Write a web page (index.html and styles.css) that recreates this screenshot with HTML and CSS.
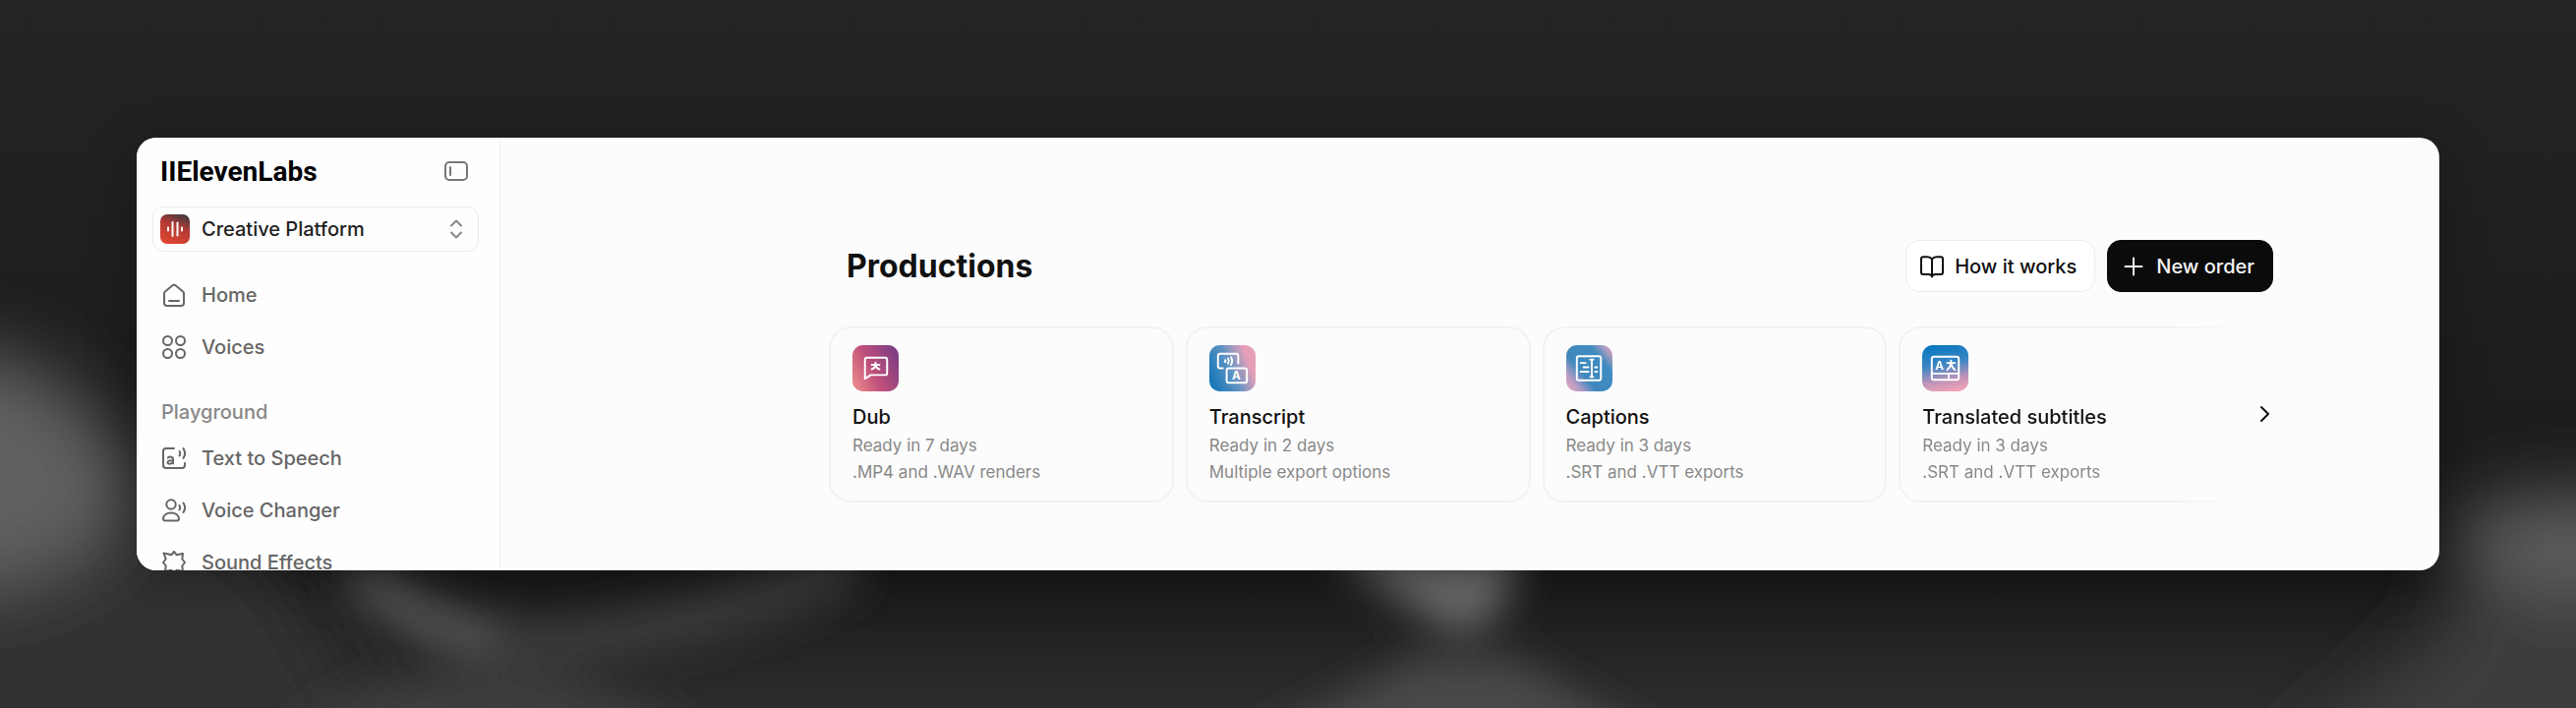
FILE: index.html
```
<!DOCTYPE html>
<html lang="en">
<head>
  <meta charset="UTF-8">
  <title>Productions - ElevenLabs</title>
  <meta name="viewport" content="width=device-width, initial-scale=1" />
  <link rel="stylesheet" href="styles.css">
</head>
<body>

  <svg class="backdrop" viewBox="0 0 2620 720" preserveAspectRatio="none" aria-hidden="true">
    <defs>
      <filter id="soft" x="-50%" y="-50%" width="200%" height="200%"><feGaussianBlur stdDeviation="20" /></filter>
      <filter id="softer" x="-50%" y="-50%" width="200%" height="200%"><feGaussianBlur stdDeviation="36" /></filter>
      <linearGradient id="base" x2="0" y2="1">
        <stop offset="0" stop-color="#242424" />
        <stop offset=".5" stop-color="#1e1e1e" />
        <stop offset=".82" stop-color="#1a1a1a" />
        <stop offset="1" stop-color="#2d2d2d" />
      </linearGradient>
    </defs>
    <rect width="2620" height="720" fill="url(#base)" />
    <g filter="url(#softer)">
      <path d="M-120 370C20 340 90 400 150 490L280 560L420 800H-120Z" fill="#313131" />
      <path d="M-100 360C20 340 80 390 130 470L110 540C60 590 0 600 -100 600Z" fill="#606060" />
      <path d="M2300 800L2450 670L2550 570L2740 460V800Z" fill="#3c3c3c" />
      <ellipse cx="2610" cy="550" rx="120" ry="46" fill="#606060" />
    </g>
    <g filter="url(#soft)" fill="none">
      <path d="M350 575C410 625 480 665 580 655C700 635 800 610 870 570" stroke="#3a3a3a" stroke-width="50" />
      <path d="M370 590C410 620 450 640 500 650" stroke="#585858" stroke-width="30" />
      <path d="M290 760C340 680 560 640 720 760Z" fill="#3d3d3d" />
      <path d="M1350 560H1550L1520 630L1480 645Z" fill="#6c6c6c" />
      <path d="M1270 760L1440 670H1540L1690 760Z" fill="#4a4a4a" />
    </g>
  </svg>

  <div class="window">

    <aside class="sidebar">
      <div class="brand">
        <a class="logo" href="#">IIElevenLabs</a>
        <button class="icon-button" type="button" aria-label="Collapse sidebar">
          <svg class="icon" viewBox="0 0 24 24"><rect x="1" y="3" width="22" height="18" rx="4" /><path d="M6 8v8" /></svg>
        </button>
      </div>

      <button class="switcher" type="button">
        <svg class="switcher-logo" viewBox="0 0 30 30">
          <defs>
            <linearGradient id="red" x1=".7" y1="0" x2=".3" y2="1">
              <stop offset="0" stop-color="#453c3c" />
              <stop offset=".4" stop-color="#b23a34" />
              <stop offset="1" stop-color="#e04632" />
            </linearGradient>
          </defs>
          <rect width="30" height="30" rx="7" fill="url(#red)" />
          <path d="M8 13.500v3M12.500 8v14M17.500 8.500v13M22 13.500v3" stroke="#fff" stroke-width="2" stroke-linecap="round" />
        </svg>
        <span class="switcher-label">Creative Platform</span>
        <svg class="icon icon-muted" viewBox="0 0 24 24"><path d="M7 8.500l5-5 5 5M7 15.500l5 5 5-5" /></svg>
      </button>

      <nav class="nav">
        <a class="nav-item" href="#">
          <svg class="icon" viewBox="0 0 24 24"><path d="M2 10.500a3 3 0 0 1 1.200-2.300L10.200 2.400a2.900 2.900 0 0 1 3.600 0l7 5.800A3 3 0 0 1 22 10.500V20a3 3 0 0 1-3 3H5a3 3 0 0 1-3-3ZM7 18h10" /></svg>
          Home
        </a>
        <a class="nav-item" href="#">
          <svg class="icon" viewBox="0 0 24 24"><circle cx="5.500" cy="5.500" r="4.500" /><circle cx="18.500" cy="5.500" r="4.500" /><circle cx="5.500" cy="18.500" r="4.500" /><circle cx="18.500" cy="18.500" r="4.500" /></svg>
          Voices
        </a>
        <h2 class="nav-title">Playground</h2>
        <a class="nav-item" href="#">
          <svg class="icon" viewBox="0 0 24 24"><path d="M12 2H4a3 3 0 0 0-3 3v14a3 3 0 0 0 3 3h16a3 3 0 0 0 3-3v-2M17.500 5c1 1.500 1 3 0 4.500M21.500 2c2 3.500 2 7 0 10" /><path d="M5.800 11.500c1.500-1.500 5.200-1.200 5.200 1.500v4.500M11 14.500c-4-.5-5.500.2-5.500 1.700 0 2.200 4.500 2 5.500-.5" /></svg>
          Text to Speech
        </a>
        <a class="nav-item" href="#">
          <svg class="icon" viewBox="0 0 24 24"><circle cx="9" cy="6" r="4.700" /><path d="M9 14.500c-4.500 0-8 2.500-8 6 0 1.300.7 2 2 2h12c1.300 0 2-.7 2-2 0-3.500-3.500-6-8-6ZM17.500 7c.8 1.500.8 3 0 4.500M21.500 4.500c2 3 2 6.500 0 9.500" /></svg>
          Voice Changer
        </a>
        <a class="nav-item" href="#">
          <svg class="icon" viewBox="0 0 24 24"><path d="M12 1l2.700 3.300L21 3l-.7 5.500L23 12l-2.700 3.500L21 21l-6.300-1.300L12 23l-2.700-3.300L3 21l.7-5.500L1 12l2.700-3.500L1.500 2.500l7.800 1.800Z" /></svg>
          Sound Effects
        </a>
      </nav>
    </aside>

    <main class="main">
      <header class="page-header">
        <h1 class="page-title">Productions</h1>
        <div class="actions">
          <button class="button" type="button">
            <svg class="icon" viewBox="0 0 24 24"><path d="M12 4.500c-1-1.500-2.500-2.200-4.500-2.200H3a2 2 0 0 0-2 2V18a2 2 0 0 0 2 2h5.500c2 0 3.500 1 3.500 2.500 0-1.500 1.500-2.500 3.500-2.500H21a2 2 0 0 0 2-2V4.300a2 2 0 0 0-2-2h-4.500c-2 0-3.500.7-4.500 2.200ZM12 4.500v18" /></svg>
            How it works
          </button>
          <button class="button button-dark" type="button">
            <svg class="icon" viewBox="0 0 24 24"><path d="M12 3.500v17M3.500 12h17" /></svg>
            New order
          </button>
        </div>
      </header>

      <section class="carousel">
        <div class="cards">
          <a class="card" href="#">
            <svg class="card-icon" viewBox="0 0 48 48">
              <defs>
                <linearGradient id="dub" x1="0" y1=".7" x2="1" y2=".2">
                  <stop offset="0" stop-color="#e5848a" />
                  <stop offset=".4" stop-color="#c0507a" />
                  <stop offset="1" stop-color="#7c3d84" />
                </linearGradient>
              </defs>
              <rect width="48" height="48" rx="11" fill="url(#dub)" />
              <path class="line" d="M13 35V15a2 2 0 0 1 2-2h19a2 2 0 0 1 2 2v14a2 2 0 0 1-2 2H19Z" />
              <path class="line" d="M20 20.500h8M24 18v2.500M24 20.500c-.5 2.500-2 4-4 4.500M24 20.500c.5 2.500 2 4 4 4.500" />
            </svg>
            <h3 class="card-title">Dub</h3>
            <p class="card-text">Ready in 7 days<br>.MP4 and .WAV renders</p>
          </a>
          <a class="card" href="#">
            <svg class="card-icon" viewBox="0 0 48 48">
              <defs>
                <linearGradient id="transcript" x1="0" y1=".7" x2="1" y2=".3">
                  <stop offset="0" stop-color="#1878b8" />
                  <stop offset=".45" stop-color="#5c93c4" />
                  <stop offset=".85" stop-color="#e5a0b8" />
                </linearGradient>
              </defs>
              <rect width="48" height="48" rx="11" fill="url(#transcript)" />
              <path class="line" d="M14 24h-3a2 2 0 0 1-2-2V11a2 2 0 0 1 2-2h17a2 2 0 0 1 2 2v8M16.500 15.500v2M19.500 14c1 1.800 1 3.200 0 5M22.500 12.500c1.500 2.700 1.500 5.300 0 8" />
              <rect class="line" x="18" y="24" width="21" height="15" rx="2" />
              <text class="glyph" x="28" y="36">A</text>
            </svg>
            <h3 class="card-title">Transcript</h3>
            <p class="card-text">Ready in 2 days<br>Multiple export options</p>
          </a>
          <a class="card" href="#">
            <svg class="card-icon" viewBox="0 0 48 48">
              <defs>
                <linearGradient id="captions" x1="0" y1=".9" x2="1" y2=".1">
                  <stop offset="0" stop-color="#e0a4c0" />
                  <stop offset=".15" stop-color="#b59cc4" />
                  <stop offset=".35" stop-color="#3f88be" />
                  <stop offset=".75" stop-color="#3f8cc0" />
                  <stop offset="1" stop-color="#e0a4c0" />
                </linearGradient>
              </defs>
              <rect width="48" height="48" rx="11" fill="url(#captions)" />
              <rect class="line" x="11" y="11.500" width="25" height="25" rx="2" />
              <path class="line" d="M26.500 15v18M25 15h3M25 33h3M15 18.500h5M18 23h5M15 27.500h8M30 23h2M30 27.500h2" />
            </svg>
            <h3 class="card-title">Captions</h3>
            <p class="card-text">Ready in 3 days<br>.SRT and .VTT exports</p>
          </a>
          <a class="card card-fade" href="#">
            <svg class="card-icon" viewBox="0 0 48 48">
              <defs>
                <linearGradient id="subtitles" x1=".4" y1="0" x2=".6" y2="1">
                  <stop offset="0" stop-color="#0b78c0" />
                  <stop offset=".4" stop-color="#3a86c4" />
                  <stop offset=".75" stop-color="#c093b8" />
                  <stop offset="1" stop-color="#f0a2b6" />
                </linearGradient>
              </defs>
              <rect width="48" height="48" rx="11" fill="url(#subtitles)" />
              <rect class="line" x="10" y="12" width="28" height="24" rx="2" />
              <text class="glyph" x="18" y="26">A</text>
              <path class="line" d="M26 18.500h8M30 16v2.500M30 18.500c-.5 3.500-2 5.500-4 7M30 18.500c.5 3.500 2 5.500 4 7M10 29.500h28M27.500 29.500V36" />
            </svg>
            <h3 class="card-title">Translated subtitles</h3>
            <p class="card-text">Ready in 3 days<br>.SRT and .VTT exports</p>
          </a>
        </div>
        <button class="next" type="button" aria-label="Next">
          <svg class="icon" viewBox="0 0 24 24"><path d="M9 5l7 7-7 7" /></svg>
        </button>
      </section>
    </main>

  </div>

</body>
</html>
```
FILE: styles.css
```
* {
  box-sizing: border-box
}

html,
body {
  margin: 0;
  padding: 0
}

body,
button {
  font-family: Inter, "Helvetica Neue", Arial, sans-serif;
  font-size: 20px;
  font-weight: 500
}

body {
  display: flex;
  height: 100vh;
  padding: 140px 139px;
  background: #222;
  color: #111;
  overflow: hidden
}

h1,
h2,
h3,
p {
  margin: 0;
  font-weight: 500
}

a {
  color: inherit;
  text-decoration: none
}

button {
  margin: 0;
  padding: 0;
  border: 0;
  background: none;
  color: inherit;
  cursor: pointer
}

.backdrop {
  position: absolute;
  top: 0;
  left: 0;
  width: 100%;
  height: 100%
}

.icon {
  flex: none;
  width: 24px;
  height: 24px;
  fill: none;
  stroke: currentColor;
  stroke-width: 2;
  stroke-linecap: round;
  stroke-linejoin: round
}

.icon-muted {
  color: #888
}

.window {
  position: relative;
  display: flex;
  flex: 1;
  border-radius: 20px;
  background: #fcfcfc;
  box-shadow: 0 8px 50px rgba(0, 0, 0, 0.3);
  overflow: hidden
}

/* sidebar */

.sidebar {
  flex: none;
  width: 370px;
  padding: 16px 21px 0 16px;
  border-right: 1px solid #f1f1f1;
  background: #fefefe
}

.brand {
  display: flex;
  align-items: center;
  justify-content: space-between;
  height: 36px;
  padding: 0 11px 0 8px
}

.logo {
  color: #000;
  font-size: 28px;
  font-weight: 700;
  font-family: Roboto, sans-serif
}

.icon-button {
  display: flex;
  color: #777
}

.switcher {
  display: flex;
  align-items: center;
  gap: 12px;
  width: 100%;
  height: 46px;
  margin-top: 18px;
  padding: 0 10px 0 7px;
  border: 1px solid #ececec;
  border-radius: 11px;
  color: #222
}

.switcher-logo {
  width: 30px;
  height: 30px
}

.switcher-label {
  flex: 1;
  text-align: left
}

.nav {
  margin-top: 17px;
  color: #666
}

.nav-item {
  display: flex;
  align-items: center;
  gap: 16px;
  height: 53px;
  padding: 0 10px
}

.nav-title {
  height: 60px;
  padding: 28px 9px 0;
  color: #888;
  font-size: 20px;
  line-height: 24px
}

/* main */

.main {
  flex: 1;
  min-width: 0;
  padding: 104px 151px 0 334px
}

.page-header {
  display: flex;
  align-items: center;
  justify-content: space-between;
  padding: 0 18px
}

.page-title {
  font-size: 32px;
  font-weight: 700
}

.actions {
  display: flex;
  gap: 12px
}

.button {
  display: flex;
  align-items: center;
  gap: 11px;
  height: 53px;
  padding: 0 18px 0 14px;
  border: 1px solid #ececec;
  border-radius: 14px;
  background: #fff
}

.button-dark {
  border-color: #0b0b0b;
  background: #0b0b0b;
  color: #f4f4f4
}

.carousel {
  position: relative;
  margin-top: 35px
}

.cards {
  display: grid;
  grid-template-columns: repeat(4, 1fr);
  gap: 12px;
  padding-right: 48px
}

.card {
  padding: 17px 22px 15px;
  border: 2px solid #f2f2f2;
  border-radius: 22px
}

.card-fade {
  mask-image: linear-gradient(90deg, #000 80%, transparent)
}

.card-icon {
  display: block;
  width: 47px;
  height: 47px
}

.card-title {
  margin-top: 12px;
  font-size: 20px;
  line-height: 28px
}

.card-text {
  margin-top: 2px;
  color: #888;
  font-size: 17px;
  font-weight: 400;
  line-height: 27px
}

.line {
  fill: none;
  stroke: #fff;
  stroke-width: 2;
  stroke-linecap: round;
  stroke-linejoin: round
}

.glyph {
  fill: #fff;
  font-size: 12px;
  font-weight: 700;
  text-anchor: middle
}

.next {
  position: absolute;
  top: 77px;
  right: 15px;
  display: flex
}
```
